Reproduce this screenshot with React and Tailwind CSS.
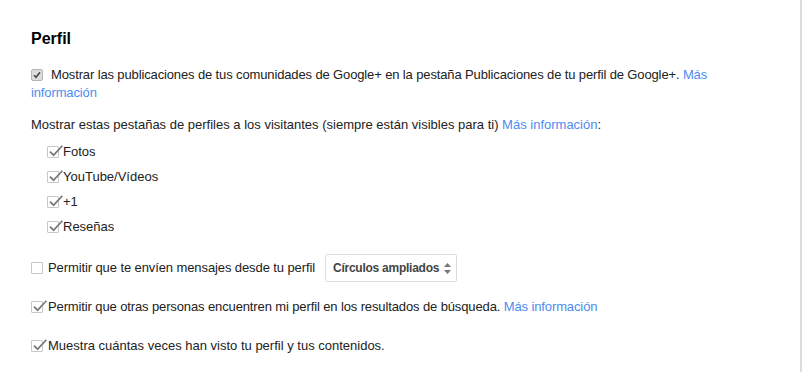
// Perfil settings section
// Google+ style profile options with custom checkboxes

const font = { fontFamily: '"Liberation Sans", Arial, sans-serif' };

function CheckMark({ color = '#7a7a7a' }) {
  return (
    <svg className="absolute left-[1px] top-[-2px] w-[14px] h-[13px]" viewBox="0 0 14 13" fill="none">
      <path d="M1.5 7.2 L4.6 10.2 L12.8 1.4" stroke={color} strokeWidth="1.7" strokeLinecap="square" />
    </svg>
  );
}

function Box({ checked = true }) {
  return (
    <span className="relative inline-block shrink-0 w-[12px] h-[12px] border border-[#c8c8c8] bg-white rounded-[1px]">
      {checked && <CheckMark />}
    </span>
  );
}

function DisabledBox() {
  return (
    <span className="relative inline-block align-[-2px] w-[12px] h-[12px] border border-[#b5b5b5] bg-[#dcdcdc] rounded-[2px]">
      <svg className="absolute left-[1px] top-[1px] w-[8px] h-[8px]" viewBox="0 0 8 8" fill="none">
        <path d="M1 4.2 L3 6.2 L7 1.2" stroke="#4a4a4a" strokeWidth="1.6" />
      </svg>
    </span>
  );
}

function Link({ children }) {
  return <a className="text-[#4d8bf0] no-underline">{children}</a>;
}

function App() {
  const tabs = ['Fotos', 'YouTube/Vídeos', '+1', 'Reseñas'];

  return (
    <div style={font} className="w-[802px] h-[372px] bg-white border-r-2 border-[#dcdcdc] text-[13px] leading-[18px] text-[#222]">
      <div className="pl-[31px] pt-[29px] pr-[20px]">
        {/* Header */}
        <h2 className="text-[16px] leading-[20px] font-bold text-black">Perfil</h2>

        {/* Community posts */}
        <p className="mt-[17px] tracking-[-0.13px]">
          <DisabledBox />
          <span className="ml-[8px]">
            Mostrar las publicaciones de tus comunidades de Google+ en la pestaña Publicaciones de tu perfil de Google+.
          </span>{' '}
          <Link>Más<br />información</Link>
        </p>

        {/* Visible tabs */}
        <p className="mt-[14px]">
          Mostrar estas pestañas de perfiles a los visitantes (siempre están visibles para ti) <Link>Más información</Link>:
        </p>
        <div className="mt-[5px] ml-[16px]">
          {tabs.map((t) => (
            <div key={t} className="flex items-center h-[25px] gap-[4px]">
              <Box />
              <span>{t}</span>
            </div>
          ))}
        </div>

        {/* Messages */}
        <div className="mt-[15px] flex items-center h-[28px]">
          <Box checked={false} />
          <span className="ml-[5px] tracking-[-0.1px]">Permitir que te envíen mensajes desde tu perfil</span>
          <div className="ml-[10px] flex items-center gap-[5px] h-[28px] pl-[7px] pr-[5px] border border-[#dcdcdc] rounded-[2px] bg-white whitespace-nowrap">
            <span className="text-[12px] font-bold text-[#444] tracking-[-0.25px]">Círculos ampliados</span>
            <svg className="w-[7px] h-[11px]" viewBox="0 0 7 11">
              <path d="M3.5 0 L7 4 L0 4 Z M0 7 L7 7 L3.5 11 Z" fill="#777" />
            </svg>
          </div>
        </div>

        {/* Search */}
        <div className="mt-[16px] flex items-center h-[18px]">
          <Box />
          <span className="ml-[5px] tracking-[-0.12px]">
            Permitir que otras personas encuentren mi perfil en los resultados de búsqueda. <Link>Más información</Link>
          </span>
        </div>

        {/* Views */}
        <div className="mt-[21px] flex items-center h-[18px]">
          <Box />
          <span className="ml-[5px]">Muestra cuántas veces han visto tu perfil y tus contenidos.</span>
        </div>
      </div>
    </div>
  );
}

export default App;
